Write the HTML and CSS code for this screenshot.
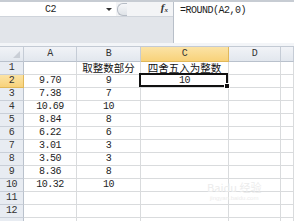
FILE: index.html
```html
<!DOCTYPE html>
<html>
<head>
<meta charset="utf-8">
<link rel="stylesheet" href="styles.css">
</head>
<body>
<div class="app">
  <div class="topbar">
    <div class="left">
      <div class="leftrow">
        <div class="namebox"><span class="nametext">C2</span><span class="arrow"></span></div>
        <div class="splitter"></div>
        <div class="fxbox"><span class="fx">f<sub>x</sub></span></div>
      </div>
    </div>
    <div class="formula">=ROUND(A2,0)</div>
  </div>
  <div class="sep"></div>
  <div class="sheet">
    <div class="h corner"><span class="tri"></span></div>
    <div class="h">A</div>
    <div class="h">B</div>
    <div class="h sel">C</div>
    <div class="h">D</div>
    <div class="h last"></div>

    <div class="rh">1</div><div class="c"></div><div class="c cjk">取整数部分</div><div class="c cjk">四舍五入为整数</div><div class="c"></div><div class="c last"></div>
    <div class="rh sel">2</div><div class="c">9.70</div><div class="c">9</div><div class="c active">10</div><div class="c"></div><div class="c last"></div>
    <div class="rh">3</div><div class="c">7.38</div><div class="c">7</div><div class="c"></div><div class="c"></div><div class="c last"></div>
    <div class="rh">4</div><div class="c">10.69</div><div class="c">10</div><div class="c"></div><div class="c"></div><div class="c last"></div>
    <div class="rh">5</div><div class="c">8.84</div><div class="c">8</div><div class="c"></div><div class="c"></div><div class="c last"></div>
    <div class="rh">6</div><div class="c">6.22</div><div class="c">6</div><div class="c"></div><div class="c"></div><div class="c last"></div>
    <div class="rh">7</div><div class="c">3.01</div><div class="c">3</div><div class="c"></div><div class="c"></div><div class="c last"></div>
    <div class="rh">8</div><div class="c">3.50</div><div class="c">3</div><div class="c"></div><div class="c"></div><div class="c last"></div>
    <div class="rh">9</div><div class="c">8.36</div><div class="c">8</div><div class="c"></div><div class="c"></div><div class="c last"></div>
    <div class="rh">10</div><div class="c">10.32</div><div class="c">10</div><div class="c"></div><div class="c"></div><div class="c last"></div>
    <div class="rh">11</div><div class="c"></div><div class="c"></div><div class="c"></div><div class="c"></div><div class="c last"></div>
    <div class="rh">12</div><div class="c"></div><div class="c"></div><div class="c"></div><div class="c"></div><div class="c last"></div>
    <div class="rh"></div><div class="c"></div><div class="c"></div><div class="c"></div><div class="c"></div><div class="c last"></div>
  </div>
  <div class="watermark"><span class="wm-big">Baidu 经验</span><span class="wm-small">jingyan.baidu.com</span></div>
</div>
</body>
</html>
```
FILE: styles.css
```css
html, body {
  margin: 0;
  padding: 0;
  background: #ffffff;
}
.app {
  position: relative;
  width: 294px;
  height: 221px;
  overflow: hidden;
  font-family: "Liberation Mono", "DejaVu Sans Mono", monospace;
  font-size: 10px;
  letter-spacing: -0.5px;
  color: #1e1e1e;
}
.topbar {
  display: flex;
  height: 43px;
  box-sizing: border-box;
  border-top: 2px solid #c7ccd3;
}
.left {
  width: 174px;
  background: #e2e5ea;
  border-right: 1px solid #b8bfc9;
  box-sizing: border-box;
}
.leftrow {
  display: flex;
  height: 14px;
  border-bottom: 1px solid #cfd4db;
  background: #f3f4f6;
}
.namebox {
  width: 116px;
  background: #ffffff;
  display: flex;
  align-items: center;
}
.nametext {
  width: 101px;
  text-align: center;
}
.arrow {
  width: 0;
  height: 0;
  margin-left: 5px;
  border-left: 3px solid transparent;
  border-right: 3px solid transparent;
  border-top: 3px solid #333;
}
.splitter {
  width: 9px;
  height: 11px;
  margin-top: 1px;
  margin-left: 1px;
  border: 1px solid #b6bcc5;
  border-right: none;
  border-radius: 6px 0 0 6px;
  background: linear-gradient(#f6f7f9, #dfe3e8);
}
.fxbox {
  flex: 1;
  display: flex;
  align-items: center;
  justify-content: flex-end;
  padding-right: 5px;
}
.fx {
  font-family: "Liberation Serif", serif;
  font-style: italic;
  font-weight: bold;
  font-size: 11px;
  letter-spacing: 0;
  color: #333;
  line-height: 11px;
}
.fx sub {
  font-size: 7px;
  vertical-align: -1px;
}
.formula {
  flex: 1;
  background: #ffffff;
  padding: 3px 0 0 6px;
  line-height: 12px;
}
.sep {
  height: 3px;
  background: #f3f5f8;
}
.sheet {
  display: grid;
  grid-template-columns: 24px 53px 64px 88px 52px 13px;
  grid-template-rows: 15px repeat(13, 13px);
  border-top: 1px solid #c3cad4;
}
.h, .rh, .c {
  box-sizing: border-box;
  display: flex;
  align-items: center;
  justify-content: center;
  white-space: nowrap;
  line-height: 12px;
}
.h {
  background: linear-gradient(#f1f3f7, #e2e7ee);
  border-right: 1px solid #c5ccd6;
  border-bottom: 1px solid #b9c1cc;
  color: #333;
}
.rh {
  background: #e8ecf2;
  border-right: 1px solid #b9c1cc;
  border-bottom: 1px solid #c9cfd8;
  color: #333;
}
.h.sel, .rh.sel {
  background: linear-gradient(#fbe3a6, #f8d27a);
  border-color: #e0b85a;
}
.corner {
  position: relative;
}
.tri {
  position: absolute;
  right: 3px;
  bottom: 3px;
  width: 0;
  height: 0;
  border-left: 7px solid transparent;
  border-bottom: 7px solid #c9ced6;
}
.c {
  border-right: 1px solid #d9dbdd;
  border-bottom: 1px solid #d9dbdd;
}
.cjk {
  font-family: "Noto Sans CJK SC", "Noto Sans CJK JP", sans-serif;
  font-size: 10.5px;
  letter-spacing: 0;
  color: #111;
}
.active {
  position: relative;
}
.active::after {
  content: "";
  position: absolute;
  left: -2px;
  top: -2px;
  right: 0;
  bottom: 0;
  border: 2px solid #111;
}
.active::before {
  content: "";
  position: absolute;
  right: -2px;
  bottom: -2px;
  width: 4px;
  height: 4px;
  background: #111;
  border: 1px solid #fff;
  z-index: 2;
}
.watermark {
  position: absolute;
  left: 207px;
  top: 181px;
  display: flex;
  flex-direction: column;
  align-items: center;
  gap: 1px;
  color: #ececec;
  pointer-events: none;
}
.wm-big {
  font-family: "Noto Sans CJK SC", sans-serif;
  font-size: 11px;
  letter-spacing: 0;
  line-height: 13px;
}
.wm-small {
  font-family: "Liberation Sans", sans-serif;
  font-size: 6px;
  letter-spacing: 0;
  line-height: 7px;
}
```
